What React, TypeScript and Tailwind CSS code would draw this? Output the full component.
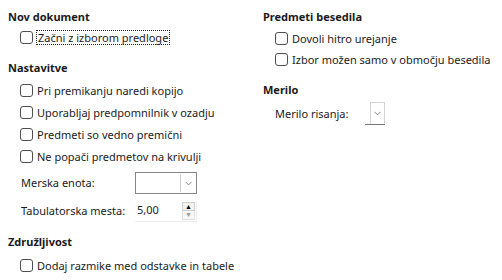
import { ChevronDown } from 'lucide-react'

const font = { fontFamily: '"Noto Sans", "Open Sans", sans-serif' }

function Check({ label, focus }: { label: string; focus?: boolean }) {
  return (
    <div className="flex h-[22px] items-center whitespace-nowrap pl-3">
      <span className="h-[13px] w-[13px] shrink-0 rounded-[3px] border border-[#4f4f4f] bg-white" />
      <span
        className={
          focus
            ? 'ml-[3px] border border-dotted border-[#222] px-px leading-[13px]'
            : 'ml-1 leading-[13px]'
        }
      >
        {label}
      </span>
    </div>
  )
}

function Heading({ children, className = '' }: { children: string; className?: string }) {
  return <div className={`flex h-[22px] items-center font-bold ${className}`}>{children}</div>
}

export default function App() {
  return (
    <div
      className="flex h-[280px] w-[502px] bg-white pt-[6px] text-[11px] text-[#1b1b1b]"
      style={font}
    >
      <div className="flex w-[263px] flex-col pl-2">
        <Heading>Nov dokument</Heading>
        <div className="-mt-[2px]">
          <Check label="Začni z izborom predloge" focus />
        </div>
        <Heading className="mt-[9px]">Nastavitve</Heading>
        <Check label="Pri premikanju naredi kopijo" />
        <Check label="Uporabljaj predpomnilnik v ozadju" />
        <Check label="Predmeti so vedno premični" />
        <Check label="Ne popači predmetov na krivulji" />
        <div className="mt-1 flex h-[24px] items-center pl-[13px]">
          <span className="w-[114px] shrink-0">Merska enota:</span>
          <div className="flex h-[22px] w-[62px] shrink-0 items-stretch border border-[#858585] bg-white">
            <div className="flex-1" />
            <div className="my-px mr-px flex w-[15px] items-center justify-center border-l border-[#cfcfcf]">
              <ChevronDown size={11} strokeWidth={1.5} className="text-[#555]" />
            </div>
          </div>
        </div>
        <div className="mt-[5px] flex h-[22px] items-center pl-[13px]">
          <span className="w-[114px] shrink-0">Tabulatorska mesta:</span>
          <div className="flex h-[21px] w-[62px] shrink-0 items-center border-r border-b border-[#ececec] bg-white">
            <span className="flex-1 pl-[2px]">5,00</span>
            <div className="mr-[1px] flex h-[18px] w-[13px] flex-col">
              <div className="flex flex-1 items-center justify-center border border-[#cfcfcf] bg-[#f3f3f3] text-[7px] leading-none text-black">
                ▲
              </div>
              <div className="flex flex-1 items-center justify-center border border-t-0 border-[#e0e0e0] bg-[#f7f7f7] text-[7px] leading-none text-[#9a9a9a]">
                ▼
              </div>
            </div>
          </div>
        </div>
        <Heading className="mt-[9px]">Združljivost</Heading>
        <div className="mt-px">
          <Check label="Dodaj razmike med odstavke in tabele" />
        </div>
      </div>
      <div className="flex flex-1 flex-col">
        <Heading>Predmeti besedila</Heading>
        <div className="-mt-px flex flex-col">
          <div className="-mb-px">
            <Check label="Dovoli hitro urejanje" />
          </div>
          <Check label="Izbor možen samo v območju besedila" />
        </div>
        <Heading className="mt-[9px]">Merilo</Heading>
        <div className="flex h-[24px] items-center pl-3">
          <span className="w-[90px] shrink-0 pt-[3px]">Merilo risanja:</span>
          <div className="flex h-[23px] w-[20px] shrink-0 border-b border-[#777]">
            <div className="w-[5px]" />
            <div className="flex flex-1 items-center justify-center border border-b-0 border-[#d4d4d4]">
              <ChevronDown size={11} strokeWidth={1.5} className="text-[#555]" />
            </div>
          </div>
        </div>
      </div>
    </div>
  )
}
